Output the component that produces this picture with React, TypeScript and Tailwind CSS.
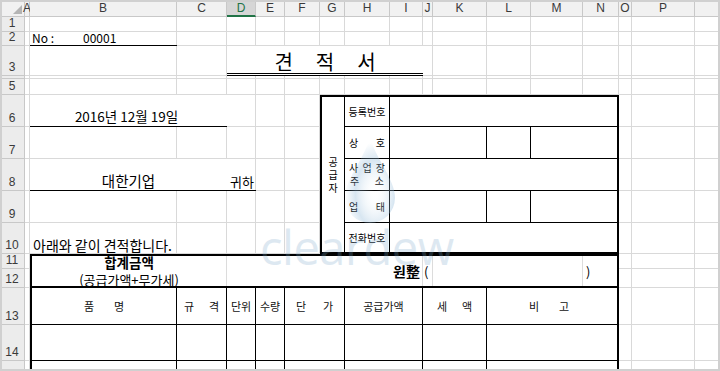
import React from "react";

const letters = ["", "A", "B", "C", "D", "E", "F", "G", "H", "I", "J", "K", "L", "M", "N", "O", "P", ""];
const rowNums = ["1", "2", "3", "", "5", "6", "7", "8", "9", "10", "11", "12", "13", "14", ""];

const kr = "font-['Noto_Sans_CJK_KR','Noto_Sans',sans-serif]";

function Spread({ chars, className }: { chars: string[]; className: string }) {
    return (
        <div className={`flex items-center ${className}`}>
            {chars.map((ch, i) => (
                <span key={i}>{ch}</span>
            ))}
        </div>
    );
}

export default function App() {
    return (
        <div className={`relative w-[720px] h-[371px] overflow-hidden bg-white text-black ${kr}`}>
            <div className="grid h-full grid-cols-[25px_5px_147px_50px_29px_29px_35px_25px_45px_33px_10px_54px_44px_52px_36px_13px_63px_1fr] grid-rows-[17px_15px_14px_30px_3px_16px_32px_32px_32px_32px_31px_15px_19px_37px_36px_1fr]">
                {/* column headers */}
                {letters.map((l, c) => (
                    <div
                        key={`h-${c}`}
                        style={{ gridRow: 1, gridColumn: c + 1 }}
                        className={`relative flex items-center justify-center overflow-visible border-r border-b border-[#c8c8c8] font-['Liberation_Sans',sans-serif] text-[12px] text-[#3a3a3a] ${
                            l === "D" ? "bg-[#d6d6d6] border-b-2 border-b-[#217346] text-[#217346]" : "bg-[#f1f1f1]"
                        }`}
                    >
                        {c === 0 ? (
                            <svg className="absolute right-[2px] bottom-[2px]" width="9" height="9" viewBox="0 0 9 9">
                                <polygon points="9,0 9,9 0,9" fill="#b4b4b4" />
                            </svg>
                        ) : (
                            l
                        )}
                    </div>
                ))}

                {/* row headers */}
                {rowNums.map((n, r) => (
                    <div
                        key={`r-${r}`}
                        style={{ gridRow: r + 2, gridColumn: 1 }}
                        className="flex items-end justify-center overflow-hidden border-r border-b border-[#c8c8c8] bg-[#ececec] pb-[2px] font-['Liberation_Sans',sans-serif] text-[12px] leading-none text-[#3a3a3a]"
                    >
                        {n}
                    </div>
                ))}

                {/* cell gridlines */}
                {rowNums.map((_, r) =>
                    letters.slice(1).map((__, c) => (
                        <div
                            key={`c-${r}-${c}`}
                            style={{ gridRow: r + 2, gridColumn: c + 2 }}
                            className="border-r border-b border-[#d9d9d9]"
                        />
                    ))
                )}

                {/* row 2 */}
                <div className="col-start-3 row-start-3 flex items-end border-b border-black pb-[1px] text-[12px] leading-none">
                    <span className="pl-[2px] w-[53px]">No :</span>
                    <span>00001</span>
                </div>

                {/* title */}
                <div className="col-start-5 col-span-6 row-start-4 flex items-end justify-center gap-[23px] bg-white border-b-[3px] border-double border-black pb-[1px] text-[20px] leading-none">
                    <span>견</span>
                    <span>적</span>
                    <span>서</span>
                </div>

                {/* date */}
                <div className="col-start-3 col-span-2 row-start-7 flex items-end justify-center bg-white border-b border-black pb-[3px] pr-[4px] text-[13.5px] leading-none">
                    2016년 12월 19일
                </div>

                {/* recipient */}
                <div className="col-start-3 col-span-2 row-start-9 flex items-end justify-center bg-white border-b border-black pb-[2px] text-[14.5px] leading-none">
                    대한기업
                </div>
                <div className="col-start-5 row-start-9 flex items-end border-b border-black pb-[2px] pl-[3px] text-[13px] leading-none">
                    귀하
                </div>

                {/* row 10 */}
                <div className="col-start-3 col-span-2 row-start-11 flex items-end whitespace-nowrap pb-[2px] pl-[3px] text-[14px] leading-none">
                    아래와 같이 견적합니다.
                </div>

                {/* supplier box */}
                <div className="col-start-8 col-span-8 row-start-7 row-span-5 grid grid-cols-[23px_45px_97px_44px_1fr] grid-rows-[30px_32px_32px_32px_1fr] bg-white border-2 border-black text-[10px] leading-none">
                    <div className="row-span-5 flex flex-col items-center justify-center gap-[3px] border-r border-black">
                        <span>공</span>
                        <span>급</span>
                        <span>자</span>
                    </div>

                    <div className="flex items-center justify-center border-r border-b border-black">등록번호</div>
                    <div className="col-span-3 border-b border-black" />

                    <Spread chars={["상", "호"]} className="justify-between px-[4px] border-r border-b border-black" />
                    <div className="border-r border-b border-black" />
                    <div className="border-r border-b border-black" />
                    <div className="border-b border-black" />

                    <div className="flex flex-col justify-center gap-[3px] px-[4px] border-r border-b border-black">
                        <Spread chars={["사", "업", "장"]} className="justify-between" />
                        <Spread chars={["주", "소"]} className="justify-between px-[1px]" />
                    </div>
                    <div className="col-span-3 border-b border-black" />

                    <Spread chars={["업", "태"]} className="justify-between px-[4px] border-r border-b border-black" />
                    <div className="border-r border-b border-black" />
                    <div className="border-r border-b border-black" />
                    <div className="border-b border-black" />

                    <div className="flex items-center justify-center border-r border-black">전화번호</div>
                    <div className="col-span-3" />
                </div>

                {/* totals + item table */}
                <div className="col-start-3 col-span-13 row-start-12 row-span-5 flex flex-col bg-white border-t-2 border-x-2 border-black">
                    <div className="flex h-[32px] shrink-0 border-b-2 border-black">
                        <div className="flex w-[195px] flex-col items-center justify-center gap-[3px] border-r border-[#dcdcdc] leading-none">
                            <span className="text-[13.5px] font-bold">합계금액</span>
                            <span className="text-[13px]">(공급가액+무가세)</span>
                        </div>
                        <div className="flex w-[196px] items-center justify-end border-r border-[#dcdcdc] pr-[2px] text-[14px] font-bold leading-none">
                            원整
                        </div>
                        <div className="flex w-[10px] items-center border-r border-[#dcdcdc] pl-[1px] text-[13px] leading-none">(</div>
                        <div className="w-[150px] border-r border-[#dcdcdc]" />
                        <div className="flex flex-1 items-center pl-[3px] text-[13px] leading-none">)</div>
                    </div>

                    <div className="grid h-[37px] shrink-0 grid-cols-[145px_50px_29px_29px_60px_78px_64px_1fr] border-b border-black text-[11px] leading-none text-[#111]">
                        <Spread chars={["품", "명"]} className="justify-center gap-[20px] border-r border-black" />
                        <Spread chars={["규", "격"]} className="justify-between px-[7px] border-r border-black" />
                        <div className="flex items-center justify-center border-r border-black">단위</div>
                        <div className="flex items-center justify-center border-r border-black">수량</div>
                        <Spread chars={["단", "가"]} className="justify-between px-[11px] border-r border-black" />
                        <div className="flex items-center justify-center border-r border-black">공급가액</div>
                        <Spread chars={["세", "액"]} className="justify-between px-[14px] border-r border-black" />
                        <Spread chars={["비", "고"]} className="justify-center gap-[20px] pr-[6px]" />
                    </div>

                    {[0, 1].map((i) => (
                        <div
                            key={i}
                            className={`grid shrink-0 grid-cols-[145px_50px_29px_29px_60px_78px_64px_1fr] ${
                                i === 0 ? "h-[36px] border-b border-black" : "flex-1"
                            }`}
                        >
                            <div className="border-r border-black" />
                            <div className="border-r border-black" />
                            <div className="border-r border-black" />
                            <div className="border-r border-black" />
                            <div className="border-r border-black" />
                            <div className="border-r border-black" />
                            <div className="border-r border-black" />
                            <div />
                        </div>
                    ))}
                </div>
            </div>

            {/* watermark */}
            <svg className="pointer-events-none absolute left-[342px] top-[136px]" width="56" height="92" viewBox="0 0 56 92">
                <defs>
                    <radialGradient id="drop" cx="60%" cy="65%" r="60%">
                        <stop offset="0%" stopColor="#ffffff" stopOpacity="0" />
                        <stop offset="65%" stopColor="#8fb8d8" stopOpacity="0.35" />
                        <stop offset="100%" stopColor="#8fb8d8" stopOpacity="0" />
                    </radialGradient>
                </defs>
                <path d="M28 2 C20 26 3 44 3 62 A25 25 0 0 0 53 62 C53 44 36 26 28 2 Z" fill="url(#drop)" />
            </svg>
            <div className="pointer-events-none absolute left-[260px] top-[224px] font-['Open_Sans',sans-serif] text-[47px] leading-none tracking-[-0.5px] text-[#7aa6c8] opacity-25">
                cleardew
            </div>

            {/* window frame */}
            <div className="pointer-events-none absolute inset-0 border-2 border-[#d0d0d0]" />
        </div>
    );
}
